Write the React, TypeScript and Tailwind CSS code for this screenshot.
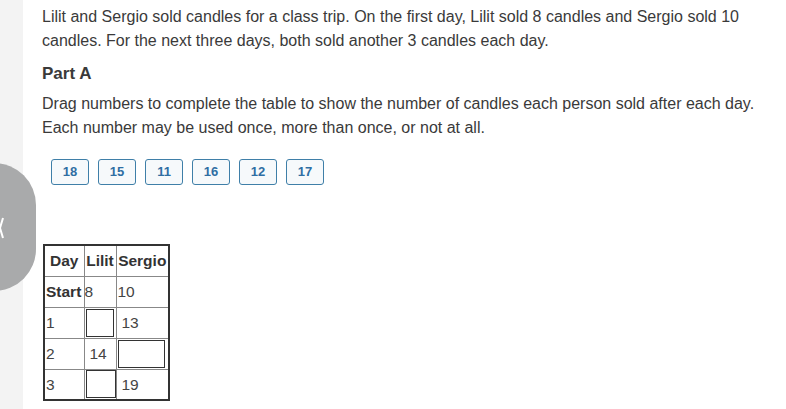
const numbers = [18, 15, 11, 16, 12, 17];

const Box = ({ w }: { w: string }) => (
  <div className={`${w} h-[28px] border border-[#333] bg-white`} />
);

export default function App() {
  return (
    <div className="relative w-[786px] h-[409px] overflow-hidden bg-white font-['Liberation_Sans',Arial,sans-serif] text-[#3a3a3a]">
      <div className="absolute left-0 top-0 h-full w-[23px] bg-[#f3f3f3]" />
      <div className="absolute left-[-48px] top-[163px] w-[84px] h-[128px] rounded-full bg-[#a9aaab]" />
      <svg className="absolute left-0 top-[216px]" width="4" height="24" viewBox="0 0 4 24">
        <path d="M3 2 L0 12 L3 22" stroke="#fff" strokeWidth="2" fill="none" />
      </svg>

      <div className="relative w-[762px] pl-[42px] pt-[5px]">
        <p className="text-[16px] leading-[24px]">
          Lilit and Sergio sold candles for a class trip. On the first day, Lilit sold 8 candles and Sergio sold 10 candles. For the next three days, both sold another 3 candles each day.
        </p>
        <h3 className="mt-[9px] text-[17px] font-bold leading-[24px]">Part A</h3>
        <p className="mt-[6px] text-[16px] leading-[24px]">
          Drag numbers to complete the table to show the number of candles each person sold after each day. Each number may be used once, more than once, or not at all.
        </p>

        <div className="mt-[19px] ml-[9px] flex gap-[9px]">
          {numbers.map((n) => (
            <div
              key={n}
              className="w-[38px] h-[26px] flex items-center justify-center rounded-[3px] border border-[#3f7fa8] bg-[#f6f9fb] text-[13px] font-bold text-[#2f6ea3]"
            >
              {n}
            </div>
          ))}
        </div>

        <table className="mt-[59px] ml-[1px] w-[125px] table-fixed border-collapse border-2 border-[#333] text-[15.5px] text-[#444]">
          <colgroup>
            <col className="w-[40px]" />
            <col className="w-[32px]" />
            <col className="w-[53px]" />
          </colgroup>
          <tbody>
            <tr className="h-[31px] font-bold text-[#333]">
              <td className="border border-[#888] px-0 text-center">Day</td>
              <td className="border border-[#888] px-0 text-center">Lilit</td>
              <td className="border border-[#888] px-0 text-center">Sergio</td>
            </tr>
            <tr className="h-[31px]">
              <td className="border border-[#888] px-[1px] font-bold text-[#333]">Start</td>
              <td className="border border-[#888] px-0">8</td>
              <td className="border border-[#888] pl-[1px]">10</td>
            </tr>
            <tr className="h-[31px]">
              <td className="border border-[#888] px-[1px]">1</td>
              <td className="border border-[#888] px-[1px]"><Box w="w-[28px]" /></td>
              <td className="border border-[#888] pl-[5px]">13</td>
            </tr>
            <tr className="h-[31px]">
              <td className="border border-[#888] px-[1px]">2</td>
              <td className="border border-[#888] pl-[5px]">14</td>
              <td className="border border-[#888] px-[1px]"><Box w="w-[47px]" /></td>
            </tr>
            <tr className="h-[31px]">
              <td className="border border-[#888] px-[1px]">3</td>
              <td className="border border-[#888] px-[1px]"><Box w="w-[30px]" /></td>
              <td className="border border-[#888] pl-[5px]">19</td>
            </tr>
          </tbody>
        </table>
      </div>
    </div>
  );
}
